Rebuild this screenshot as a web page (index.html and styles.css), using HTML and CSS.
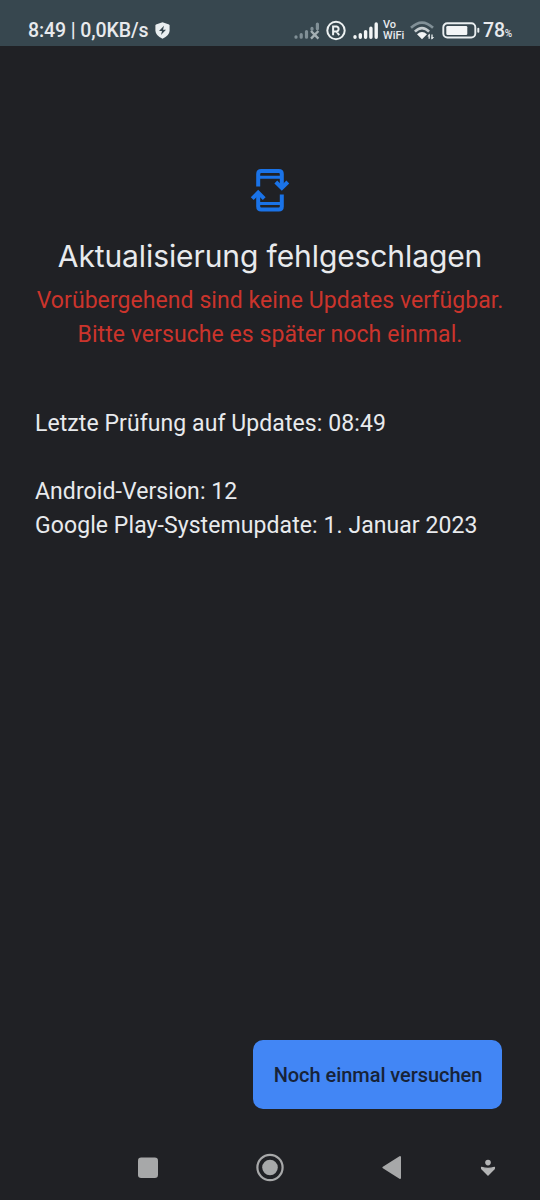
FILE: index.html
```html
<!DOCTYPE html>
<html lang="de">
<head>
    <meta charset="UTF-8">
    <meta name="viewport" content="width=device-width, initial-scale=1.0">
    <title>Systemupdate</title>
    <link rel="stylesheet" href="styles.css">
</head>
<body>
    <header class="status-bar">
        <div class="status-left">
            <span class="status-text">8:49 | 0,0KB/s</span>
            <svg class="shield" width="15" height="17" viewBox="0 0 15 17">
                <path fill="#e9eef0" d="M7.5 0.3 L14 2.6 Q14.6 2.9 14.6 3.6 V8.8 Q14.4 13.6 7.5 16.7 Q0.6 13.6 0.4 8.8 V3.6 Q0.4 2.9 1 2.6 Z"/>
                <path fill="#37474f" d="M9 3.7 L4 9 H7 L6 13.1 L11 7.7 H8 Z"/>
            </svg>
        </div>
        <div class="status-right">
            <svg class="signal-off" width="27" height="24" viewBox="0 0 27 24">
                <g stroke="#819097" stroke-width="3.2" stroke-linecap="round">
                    <path d="M2 19.2 V18.8 M7.2 19.2 V16.6 M12.5 19.2 V13.6"/>
                    <path d="M18 11.2 V10.4 M23.4 10.8 V6"/>
                </g>
                <path stroke="#a4afb3" stroke-width="2.4" d="M17 13 L24.4 20.6 M24.4 13 L17 20.6"/>
            </svg>
            <svg class="roaming" width="20" height="24" viewBox="0 0 20 24">
                <circle cx="10" cy="12.5" r="8.7" fill="none" stroke="#edf1f2" stroke-width="2"/>
                <path fill="none" stroke="#edf1f2" stroke-width="2" d="M7.1 17.2 V8.6 H10.6 A2.5 2.5 0 0 1 10.6 13.5 H7.1 M10.4 13.5 L13.2 17.2"/>
            </svg>
            <svg class="signal" width="26" height="24" viewBox="0 0 26 24">
                <path stroke="#f3f5f6" stroke-width="3.4" stroke-linecap="round" d="M2 19.2 V18.8 M7.3 19.2 V16.6 M12.6 19.2 V13.6 M17.9 19.2 V10.2 M23.2 19.2 V6"/>
            </svg>
            <div class="vowifi"><span>Vo</span><span>WiFi</span></div>
            <svg class="wifi" width="25" height="24" viewBox="0 0 25 24">
                <g fill="none" stroke-width="2.6">
                    <path stroke="#819097" d="M1 9.8 Q12 -0.6 23 9.8"/>
                    <path stroke="#c6cdd0" d="M4.9 13.6 Q12 6.6 19.1 13.6"/>
                </g>
                <path fill="#f3f5f6" d="M7 16.2 Q12 11.6 17 16.2 L12 21.3 Z"/>
                <path stroke="#dfe4e6" stroke-width="1.4" d="M19.2 16.5 V20.8 M22 16.5 V21"/>
                <path fill="#dfe4e6" d="M17.3 18.6 L19.8 15.6 V18.6 Z M21.5 19 H24.2 L21.6 21.8 Z"/>
            </svg>
            <svg class="battery" width="38" height="24" viewBox="0 0 38 24">
                <rect x="1.3" y="5.3" width="32" height="14.2" rx="4" fill="none" stroke="#e9eef0" stroke-width="1.9"/>
                <rect x="4.3" y="8" width="21" height="9" rx="1.2" fill="#f3f5f6"/>
                <path stroke="#e9eef0" stroke-width="2" stroke-linecap="round" d="M36.3 10.8 V13.8"/>
            </svg>
            <span class="percent">78<small>%</small></span>
        </div>
    </header>

    <main class="content">
        <svg class="update-icon" width="40" height="46" viewBox="0 0 40 46">
            <g fill="none" stroke="#1a73e8" stroke-width="4">
                <path d="M8.2 18.5 V6 Q8.2 3 11.2 3 H28.8 Q31.8 3 31.8 6 V19"/>
                <path d="M31.8 26.5 V38.5 Q31.8 41.5 28.8 41.5 H11.2 Q8.2 41.5 8.2 38.5 V26"/>
                <path stroke-width="3" d="M8.2 9.2 H31.8 M8.2 35.5 H31.8"/>
                <path d="M25.8 14 L31.8 20 L37.8 14"/>
                <path d="M2.2 30.6 L8.2 24.6 L14.2 30.6"/>
            </g>
        </svg>
        <h1>Aktualisierung fehlgeschlagen</h1>
        <p class="error">Vorübergehend sind keine Updates verfügbar.<br>Bitte versuche es später noch einmal.</p>
        <div class="details">
            <p>Letzte Prüfung auf Updates: 08:49</p>
            <p>Android-Version: 12<br>Google Play-Systemupdate: 1. Januar 2023</p>
        </div>
    </main>

    <div class="actions">
        <button class="retry">Noch einmal versuchen</button>
    </div>

    <nav class="nav-bar">
        <svg width="30" height="30" viewBox="0 0 30 30">
            <rect x="5" y="4.5" width="20" height="20.5" rx="3.2" fill="#a7a8a9"/>
        </svg>
        <svg width="30" height="30" viewBox="0 0 30 30">
            <circle cx="15" cy="14.5" r="12.6" fill="none" stroke="#a7a8a9" stroke-width="2.2"/>
            <circle cx="15" cy="14.5" r="7.8" fill="#a7a8a9"/>
        </svg>
        <svg width="30" height="30" viewBox="0 0 30 30">
            <path fill="#a7a8a9" stroke="#a7a8a9" stroke-width="2" stroke-linejoin="round" d="M6.4 14.5 L23 4 V25 Z"/>
        </svg>
        <svg class="nav-down" width="18" height="30" viewBox="0 0 18 30">
            <circle cx="9" cy="9.6" r="2.8" fill="#b3b4b5"/>
            <path fill="#b3b4b5" stroke="#b3b4b5" stroke-width="1.4" stroke-linejoin="round" d="M2.6 14.4 Q9 16.4 15.4 14.4 L15.2 15.8 L9 22 L2.8 15.8 Z"/>
        </svg>
    </nav>
</body>
</html>
```

FILE: styles.css
```css
* {
    box-sizing: border-box;
}

body {
    margin: 0;
    height: 1200px;
    display: flex;
    flex-direction: column;
    background: #202125;
    color: #e8eaed;
    font-family: Roboto, sans-serif;
}

svg {
    display: block;
    flex-shrink: 0;
}

.status-bar {
    display: flex;
    justify-content: space-between;
    height: 46px;
    padding: 18px 26px 0 28px;
    background: #37474f;
}

.status-left,
.status-right {
    display: flex;
    align-items: center;
    height: 24px;
}

.status-text {
    width: 127px;
    font-size: 19.5px;
    font-weight: 500;
    line-height: 24px;
    letter-spacing: -0.1px;
    white-space: nowrap;
    padding-top: 2px;
}

.roaming {
    margin-left: 5px;
}

.signal {
    margin-left: 7px;
}

.vowifi {
    display: flex;
    flex-direction: column;
    gap: 1px;
    width: 24px;
    margin-left: 4px;
    font-size: 11px;
    font-weight: 500;
    line-height: 10px;
}

.vowifi span {
    height: 10px;
}

.wifi {
    margin-left: 3px;
}

.battery {
    margin-left: 7px;
}

.percent {
    width: 31px;
    margin-left: 3px;
    padding-top: 4px;
    font-size: 19.5px;
    font-weight: 500;
    line-height: 24px;
    letter-spacing: -0.2px;
    white-space: nowrap;
}

.percent small {
    font-size: 10px;
}

.content {
    flex: 1;
    display: flex;
    flex-direction: column;
    align-items: center;
    padding: 122px 35px 0;
}

h1 {
    margin: 22px 0 0;
    font-family: Inter, sans-serif;
    font-size: 30px;
    font-weight: 400;
    line-height: 40px;
    letter-spacing: -0.1px;
    white-space: nowrap;
}

p {
    margin: 0;
    font-size: 23px;
    line-height: 34px;
    white-space: nowrap;
}

.error {
    margin-top: 8px;
    color: #cb342c;
    text-align: center;
    letter-spacing: 0.07px;
}

.details {
    align-self: stretch;
    display: flex;
    flex-direction: column;
    gap: 34px;
    margin-top: 55px;
    letter-spacing: 0.08px;
}

.actions {
    display: flex;
    justify-content: flex-end;
    padding-right: 38px;
}

.retry {
    width: 249px;
    height: 69px;
    padding: 1px 0 0 1px;
    border: none;
    border-radius: 10px;
    background: #4286f5;
    color: #172338;
    font-family: inherit;
    font-size: 20px;
    font-weight: 500;
    letter-spacing: -0.05px;
    white-space: nowrap;
}

.nav-bar {
    display: flex;
    gap: 92px;
    height: 91px;
    padding: 44px 0 0 133px;
}

.nav-down {
    margin-left: -20px;
}
```
